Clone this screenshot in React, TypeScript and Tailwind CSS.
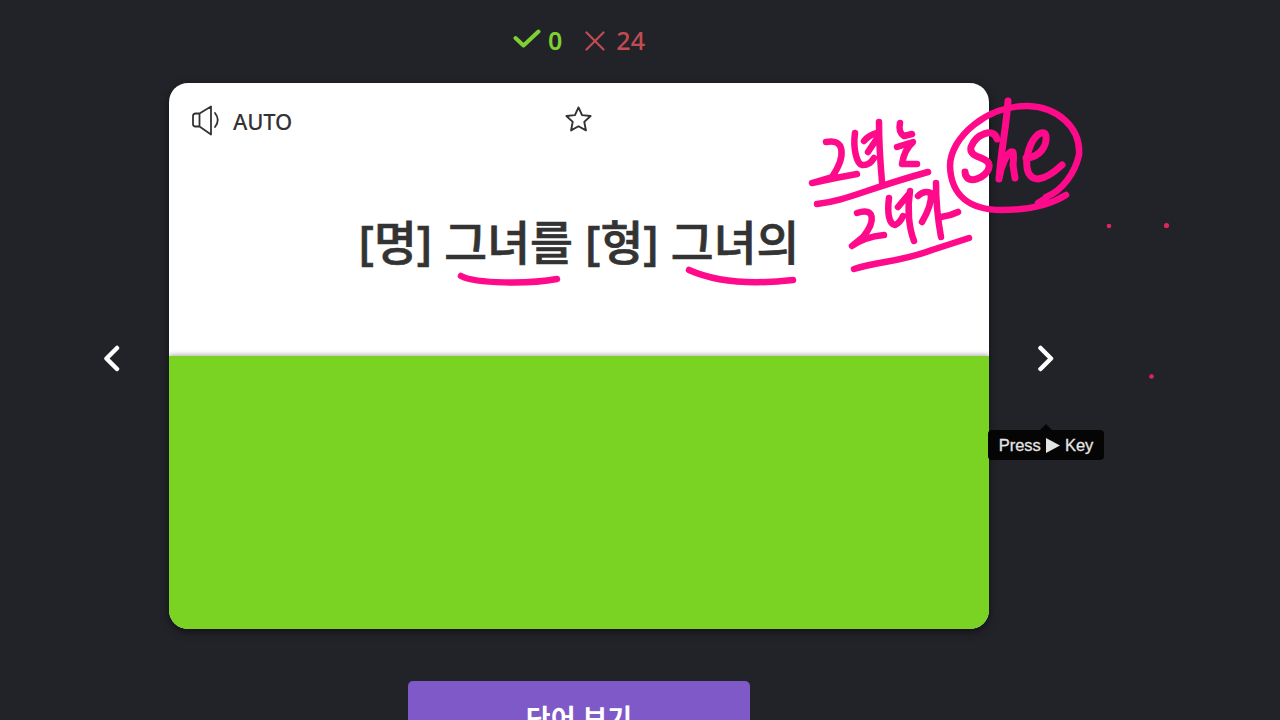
import type { ReactNode } from "react";

const INK = "#ff0a8a";

export default function App() {
  return (
    <div className="relative h-[720px] w-[1280px] overflow-hidden bg-[#222328] font-['Noto_Sans','Noto_Sans_CJK_KR',sans-serif]">
      <main className="flex w-[1158px] flex-col items-center">
        <Score known={0} unknown={24} />

        <div className="flex w-full items-center justify-center">
          <NavButton>
            <path d="M14 3 3.500 13.500 14 24" />
          </NavButton>
          <Card />
          <div className="relative">
            <NavButton>
              <path d="M3.500 3 14 13.500 3.500 24" />
            </NavButton>
            <Tooltip />
          </div>
        </div>

        <button className="mt-[52px] h-[76px] w-[342px] rounded-[5px] bg-[#7f59c8] text-[27px] leading-[36px] font-bold text-white">
          단어 보기
        </button>
      </main>

      <Ink />
    </div>
  );
}

function Score({ known, unknown }: { known: number; unknown: number }) {
  return (
    <div className="flex h-[83px] w-full items-center justify-center pb-[1px] text-[25px] font-medium">
      <div className="flex items-center gap-[7px] text-[#7ed033]">
        <svg className="mb-1 h-5 w-7" viewBox="0 0 28 20" fill="none" stroke="currentColor" strokeWidth="4" strokeLinecap="round" strokeLinejoin="round">
          <path d="M2.500 9 10.500 16.500 25.500 2.500" />
        </svg>
        <span className="font-semibold">{known}</span>
      </div>
      <div className="ml-[23px] flex items-center gap-[11px] text-[#c24c52]">
        <svg className="mb-px h-5 w-5" viewBox="0 0 20 20" fill="none" stroke="currentColor" strokeWidth="2.200" strokeLinecap="round">
          <path d="M1.500 1.500 18.500 18.500M18.500 1.500 1.500 18.500" />
        </svg>
        <span>{unknown}</span>
      </div>
    </div>
  );
}

function Card() {
  return (
    <section className="flex h-[546px] w-[820px] flex-col overflow-hidden rounded-[19px] bg-white text-[#333] shadow-[0_3px_8px_rgba(0,0,0,0.5)]">
      <div className="flex h-[273px] flex-col">
        {/* Toolbar */}
        <div className="grid h-[76px] grid-cols-3 items-center px-[22px]">
          <div className="flex items-center gap-[14px] text-[22px] leading-none font-medium tracking-[-0.2px]">
            <svg className="h-8 w-7" viewBox="0 0 28 32" fill="none" stroke="currentColor" strokeWidth="1.800" strokeLinejoin="round" strokeLinecap="round">
              <path d="M8.500 8.500H4.500Q2 8.500 2 11V19Q2 21.500 4.500 21.500H8.500ZM8.500 8.500 20 1.500V29.500L8.500 21.500M24 8Q29.500 15 24 22" />
            </svg>
            <span>AUTO</span>
          </div>
          <svg className="mb-1 h-[27px] w-[27px] justify-self-center" viewBox="0 0 28 28" fill="none" stroke="currentColor" strokeWidth="2" strokeLinejoin="round">
            <path d="m14 1.500 3.700 8 8.800.900-6.500 6.100 1.700 8.800L14 21l-7.700 4.300L8 16.500l-6.500-6.100 8.800-.900Z" />
          </svg>
        </div>
        <p className="pt-[47px] text-center text-[46.600px] leading-[72px] font-medium whitespace-nowrap [-webkit-text-stroke:0.7px_#333]">
          [명] 그녀를 [형] 그녀의
        </p>
      </div>
      <div className="h-[273px] bg-[#7ad223] shadow-[0_-1px_5px_rgba(0,0,0,0.35)]" />
    </section>
  );
}

function NavButton({ children }: { children: ReactNode }) {
  return (
    <button className="flex h-[60px] w-[114px] items-center justify-center pt-[5px]">
      <svg className="h-7 w-[18px]" viewBox="0 0 18 28" fill="none" stroke="#fff" strokeWidth="4.500" strokeLinecap="round" strokeLinejoin="round">
        {children}
      </svg>
    </button>
  );
}

function Tooltip() {
  return (
    <div className="absolute top-[98px] left-[-1px] flex w-[116px] flex-col items-center">
      <svg className="h-[6px] w-3" viewBox="0 0 12 6">
        <path d="M0 6 6 0 12 6Z" fill="#050506" />
      </svg>
      <div className="flex h-[30px] w-full items-center justify-center gap-[5px] rounded bg-[#050506] font-['Liberation_Sans',sans-serif] text-[16.500px] text-[#e4e4e4] [-webkit-text-stroke:0.3px_#e4e4e4]">
        Press
        <svg className="h-[15px] w-[14px]" viewBox="0 0 14 15" fill="currentColor">
          <path d="M0 0 14 7.500 0 15Z" />
        </svg>
        Key
      </div>
    </div>
  );
}

// Handwritten notes on top of the card
function Ink() {
  return (
    <svg className="pointer-events-none absolute inset-0" width="1280" height="720" fill="none" stroke={INK} strokeWidth="6.500" strokeLinecap="round" strokeLinejoin="round">
      {/* underlines in the question */}
      <path d="M461 276C476 284 530 284 557 279M689 270C718 283 758 284 793 280" />

      {/* 그녀는 */}
      <path d="M826 142C844 138 847 155 832 177L812 183Q834 178 857 174" />
      <path d="M855 133C853 147 856 163 862 165Q869 166 874 158M864 141Q869 135 877 133M876 140 868 152M879 122Q879 147 882 182" />
      <path d="M900 123Q898 132 904 136L912 134M897 147 913 142Q904 150 902 164L917 164" />
      <path d="M817 204C846 201 866 189 928 172" />

      {/* 그녀가 */}
      <path d="M857 213C875 207 876 221 863 237L852 246Q864 237 884 235" />
      <path d="M889 198C887 213 889 224 895 225Q900 223 903 216M898 207 908 195M910 191C907 209 909 228 914 241" />
      <path d="M918 196Q924 190 931 193Q932 205 922 222M936 183Q936 210 941 237M941 217Q950 216 958 212" />
      <path d="M854 269C880 261 900 262 932 250L969 238" />

      {/* she */}
      <g strokeWidth="7">
        <path d="M997 139C994 127 976 134 971 147C968 159 991 156 989 167C988 177 966 187 965 172" />
        <path d="M1008 101C1006 130 1002 142 999 179C1001 165 1008 150 1013 152Q1014 156 1013 165L1015 178" />
        <path d="M1026 158C1041 157 1047 145 1046 136C1045 130 1037 132 1031 144C1024 160 1025 179 1038 179Q1048 178 1062 165" />
        <path d="M1046 197C1062 191 1075 173 1079 155C1081 127 1057 107 1028 106C988 105 950 137 950 166C951 196 970 210 1002 210C1028 210 1050 205 1066 195M1038 203 1046 198" strokeWidth="6.500" />
      </g>

      <g fill="#e0245e" stroke="none">
        <circle cx="1109" cy="226" r="2.300" />
        <circle cx="1166.500" cy="225.500" r="2.600" />
        <circle cx="1151.500" cy="376.500" r="2.300" />
      </g>
    </svg>
  );
}
